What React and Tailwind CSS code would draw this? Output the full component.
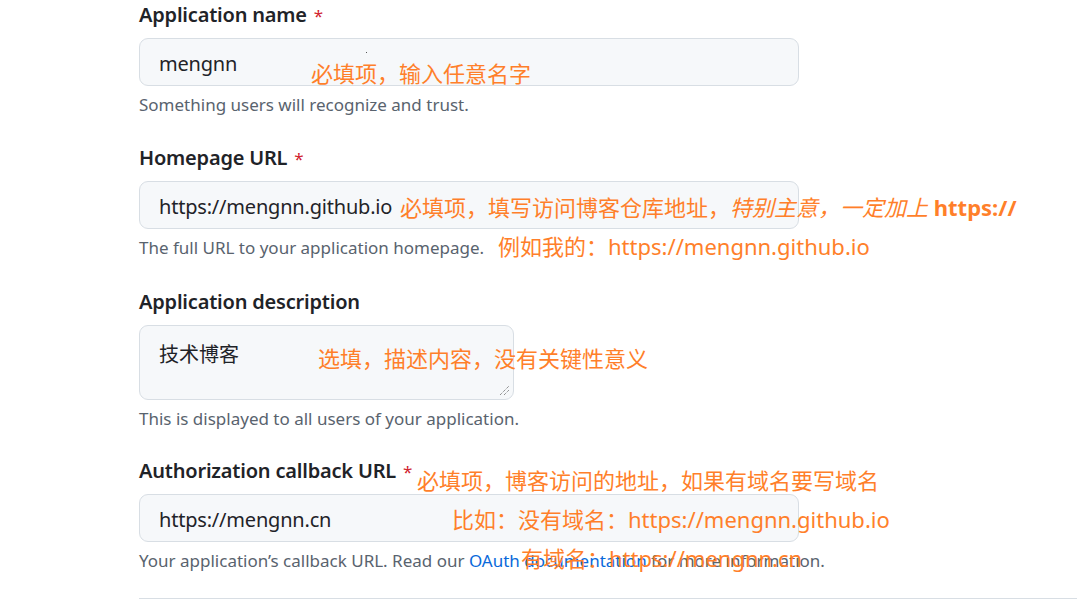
export default function App() {
  const sans = { fontFamily: '"Noto Sans", "Noto Sans CJK SC", sans-serif' };
  const Label = ({ children, req }) => (
    <div className="h-[30px] leading-[30px] text-[20px] font-semibold tracking-[-0.2px] text-[#1f2328]">
      {children}
      {req && <span className="ml-[7px] text-[17px] text-[#d1242f] font-normal">*</span>}
    </div>
  );
  const Input = ({ children, extra }) => (
    <div className="relative mt-[8px] h-[48px] w-[660px] rounded-[9px] border border-[#d8dee4] bg-[#f6f8fa] flex items-center pl-[19px] pt-[4px] text-[20px] tracking-[-0.2px] text-[#1f2328]">
      {children}
      {extra}
    </div>
  );
  const Note = ({ children }) => (
    <div className="mt-[9px] h-[20px] leading-[20px] text-[17px] text-[#59636e]">{children}</div>
  );
  const ann = "absolute whitespace-nowrap text-[22px] leading-[26px] text-[#ff7f2a]";
  return (
    <div className="relative w-[1077px] h-[602px] bg-white overflow-hidden" style={sans}>
      <div className="flex flex-col pl-[139px]">
        <div className="flex flex-col">
          <Label req>Application name</Label>
          <Input extra={<span className="absolute left-[226px] top-[13px] w-[1px] h-[1px] bg-[#555]" />}>mengnn</Input>
          <Note>Something users will recognize and trust.</Note>
        </div>

        <div className="mt-[28px] flex flex-col">
          <Label req>Homepage URL</Label>
          <Input>https://mengnn.github.io</Input>
          <Note>The full URL to your application homepage.</Note>
        </div>

        <div className="mt-[29px] flex flex-col">
          <Label>Application description</Label>
          <div className="relative mt-[8px] h-[75px] w-[375px] rounded-[9px] border border-[#d8dee4] bg-[#f6f8fa] pl-[19px] pt-[16px] text-[20px] leading-[26px] text-[#1f2328]">
            技术博客
            <svg className="absolute right-[3px] bottom-[3px]" width="12" height="12" viewBox="0 0 12 12">
              <line x1="2" y1="11" x2="11" y2="2" stroke="#666" strokeWidth="1" strokeDasharray="1 1" />
              <line x1="6" y1="11" x2="11" y2="6" stroke="#666" strokeWidth="1" strokeDasharray="1 1" />
            </svg>
          </div>
          <Note>This is displayed to all users of your application.</Note>
        </div>

        <div className="mt-[27px] flex flex-col">
          <Label req>Authorization callback URL</Label>
          <Input>https://mengnn.cn</Input>
          <Note>
            Your application’s callback URL. Read our <span className="text-[#0969da]">OAuth documentation</span> for more information.
          </Note>
        </div>

        <div className="mt-[27px] h-[1px] w-full bg-[#d8dee4]" />
      </div>

      <div className={ann} style={{ left: 311, top: 60 }}>必填项，输入任意名字</div>
      <div className={ann} style={{ left: 400, top: 194 }}>
        必填项，填写访问博客仓库地址，<span className="italic">特别主意，一定加上</span>{" "}
        <span className="font-bold">https://</span>
      </div>
      <div className={ann} style={{ left: 498, top: 233 }}>例如我的：https://mengnn.github.io</div>
      <div className={ann} style={{ left: 318, top: 345 }}>选填，描述内容，没有关键性意义</div>
      <div className={ann} style={{ left: 417, top: 467 }}>必填项，博客访问的地址，如果有域名要写域名</div>
      <div className={ann} style={{ left: 452, top: 506 }}>比如：没有域名：https://mengnn.github.io</div>
      <div className={ann} style={{ left: 521, top: 545 }}>有域名：https://mengnn.cn</div>
    </div>
  );
}
